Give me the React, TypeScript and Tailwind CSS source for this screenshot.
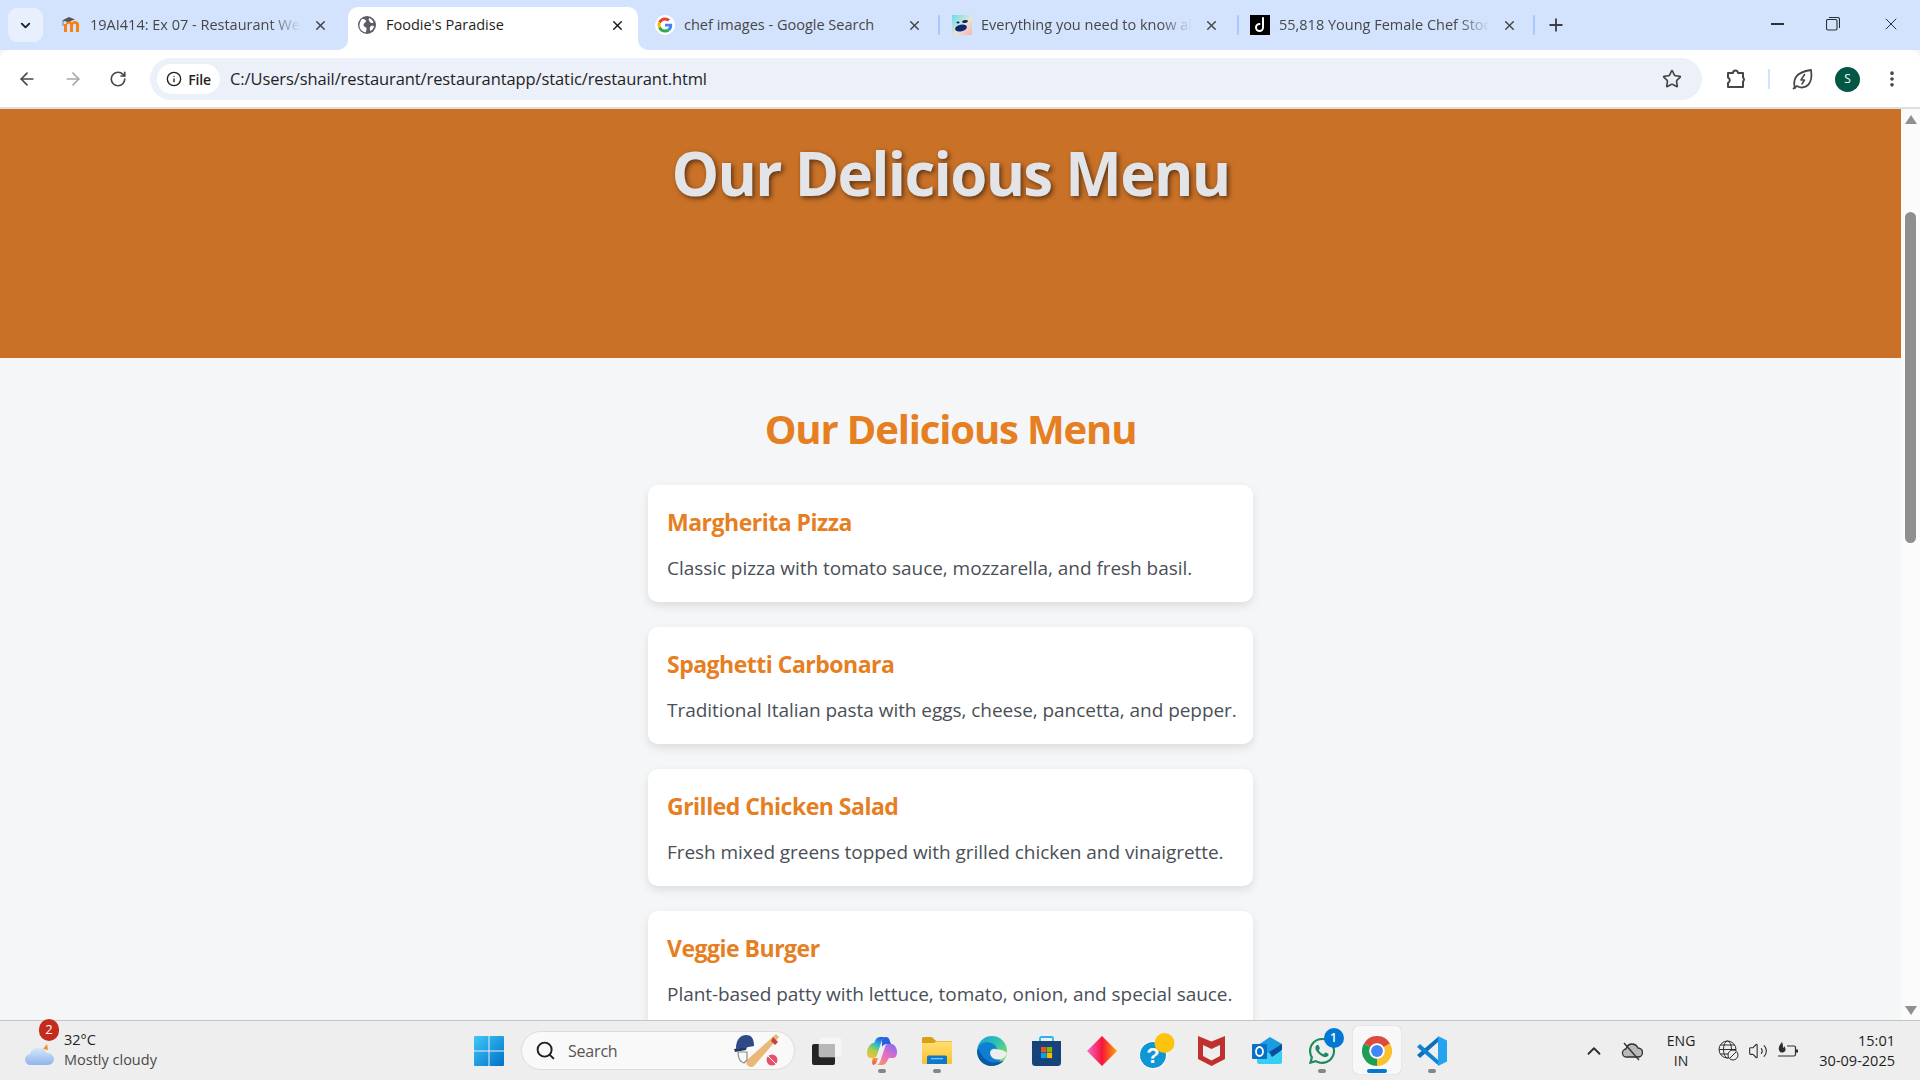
import React from "react";
import { ArrowLeft, ArrowRight, RotateCw, Star, MoreVertical, X, Plus, ChevronDown, ChevronUp, Info, Search, Volume2 } from "lucide-react";
import { FaWhatsapp } from "react-icons/fa";

const Moodle = () => (
  <svg width="20" height="18" viewBox="0 0 20 18">
    <path d="M5 8c0-2 1-3 3-3s2.500.8 3 1.500C11.600 5.700 12.700 5 14 5c2.400 0 4 1.200 4 3.500V16h-3V9.500c0-1-.5-1.700-1.500-1.700S12 8.500 12 9.500V16H9V9.500c0-1-.5-1.700-1.500-1.700S6 8.500 6 9.500V16H3V8z" fill="#f98012" />
    <path d="M1 4.500 8 1l6 2.500-7 2.500z" fill="#555" />
    <path d="M2 5v5" stroke="#777" strokeWidth="1" />
  </svg>
);
const Globe = () => (
  <svg width="18" height="18" viewBox="0 0 18 18">
    <circle cx="9" cy="9" r="9" fill="#5b5e63" />
    <path d="M4 3c2 0 4 .5 4 2S6 7 5.500 8.500 7 11 8 11.500 8.500 15 7.500 16.500C4 15.500 1 13 1.500 8.500 2 6 3 4 4 3zM11 2c2 .5 4 2.500 4.500 4.500-1 1-3 .5-3.500-.5S10 4 11 2zM13 10c1.500-.5 3 0 3 .5-.5 2-2 4-3.500 4.500-1-1-1-4 .5-5z" fill="#fff" />
  </svg>
);
const GoogleG = ({ s = 20 }: { s?: number }) => (
  <svg width={s} height={s} viewBox="0 0 48 48">
    <circle cx="24" cy="24" r="24" fill="#fff" />
    <g transform="translate(6 6) scale(.75)">
      <path fill="#EA4335" d="M24 9.500c3.500 0 6.700 1.200 9.200 3.600l6.900-6.900C35.900 2.400 30.500 0 24 0 14.600 0 6.500 5.400 2.600 13.200l8 6.200C12.500 13.700 17.800 9.500 24 9.500z" />
      <path fill="#4285F4" d="M47 24.500c0-1.600-.1-3.100-.4-4.500H24v9h12.900c-.6 3-2.200 5.500-4.800 7.200l7.700 6C44.300 38 47 31.800 47 24.500z" />
      <path fill="#FBBC05" d="M10.600 28.600c-.5-1.400-.8-3-.8-4.600s.3-3.200.8-4.600l-8-6.200C.9 16.500 0 20.100 0 24s.9 7.500 2.600 10.800l8-6.200z" />
      <path fill="#34A853" d="M24 48c6.500 0 11.900-2.100 15.900-5.800l-7.700-6c-2.200 1.400-4.900 2.300-8.200 2.300-6.200 0-11.500-4.200-13.400-9.900l-8 6.200C6.500 42.600 14.600 48 24 48z" />
    </g>
  </svg>
);
const Perplex = () => (
  <svg width="20" height="20" viewBox="0 0 20 20">
    <defs>
      <linearGradient id="pg" x1="0" y1="0" x2="1" y2="1">
        <stop offset="0" stopColor="#5fe0e8" />
        <stop offset=".55" stopColor="#e7e5d5" />
        <stop offset="1" stopColor="#fbb0b0" />
      </linearGradient>
    </defs>
    <rect width="20" height="20" fill="url(#pg)" />
    <ellipse cx="9" cy="13" rx="6" ry="3.300" fill="#10266f" transform="rotate(-12 9 13)" />
    <ellipse cx="13" cy="6.500" rx="3" ry="1.500" fill="#10266f" transform="rotate(-10 13 6.500)" />
    <ellipse cx="6" cy="7.500" rx="1.600" ry=".9" fill="#10266f" />
  </svg>
);
const Dreams = () => (
  <svg width="20" height="20" viewBox="0 0 20 20">
    <rect width="20" height="20" fill="#000" />
    <path d="M13 3v9.500a3.500 3.500 0 1 1-3.500-3.500" fill="none" stroke="#fff" strokeWidth="2" strokeLinecap="round" />
  </svg>
);
const Restore = () => (
  <svg width="14" height="14" viewBox="0 0 14 14" fill="none" stroke="#2b2f35" strokeWidth="1.100">
    <rect x=".5" y="2.500" width="10.500" height="10.500" rx="1.500" />
    <path d="M3 .5h8.500A2 2 0 0 1 13.500 2.500V11" />
  </svg>
);
const Puzzle = () => (
  <svg width="22" height="22" viewBox="0 0 22 22" fill="none" stroke="#474747" strokeWidth="2" strokeLinejoin="round">
    <path d="M3 5h5a2.500 2.500 0 0 1 5 0h5v4.500a2.500 2.500 0 0 1 0 4V19H3v-4a3 3 0 0 0 0-5.500z" />
  </svg>
);
const Leaf = () => (
  <svg width="24" height="24" viewBox="0 0 24 24" fill="none" stroke="#474747" strokeWidth="1.800" strokeLinejoin="round" strokeLinecap="round">
    <path d="M4 21c-1-3-1.500-7 1-11 3-4.500 8-6 15-7 1 6 .5 11.500-3 15-3 3-7.500 3-10 1.500" />
    <path d="M13.500 7.500 10 13h3.500L11 17" strokeWidth="1.500" />
    <path d="M2.500 21.500 6 19" />
  </svg>
);
const WinLogo = () => (
  <svg width="30" height="30" viewBox="0 0 30 30">
    <defs>
      <linearGradient id="wl" x1="0" y1="0" x2="1" y2="1">
        <stop offset="0" stopColor="#3fc8f8" />
        <stop offset="1" stopColor="#0071c9" />
      </linearGradient>
    </defs>
    <path d="M0 1a1 1 0 0 1 1-1h13.500v14.500H0zM15.500 0H29a1 1 0 0 1 1 1v13.500H15.500zM0 15.500h14.500V30H1a1 1 0 0 1-1-1zM15.500 15.500H30V29a1 1 0 0 1-1 1H15.500z" fill="url(#wl)" />
  </svg>
);
const Cricket = () => (
  <svg width="52" height="38" viewBox="0 0 52 38">
    <path d="M44 2 47 5 22 34c-2 2-5 1-7-1-1-2-1-3 0-5z" fill="#e9b876" />
    <path d="M41 5l5 5-3 3-4-4z" fill="#c4433c" />
    <path d="M4 16C4 7 9 3 14 3s8 3 8 11l-11 2-7 1z" fill="#2e4a87" />
    <path d="M2 17l13-2-1 3-11 2z" fill="#24386a" />
    <path d="M6 20c0 6 2 10 6 11l3-3V20z" fill="none" stroke="#8c8c8c" strokeWidth="1.200" />
    <circle cx="40" cy="28" r="5.500" fill="#e4536c" />
    <path d="M36 24l8 8" stroke="#fff" strokeWidth="1" />
  </svg>
);
const TaskView = () => (
  <svg width="30" height="28" viewBox="0 0 30 28">
    <rect x="0" y="7" width="23" height="21" rx="2" fill="#242424" />
    <rect x="7" y="0" width="23" height="20" rx="2" fill="#f6f6f6" stroke="#e0e0e0" strokeWidth=".5" />
    <rect x="7" y="7" width="16" height="13" rx="1" fill="#b8b8b8" />
  </svg>
);
const Copilot = () => (
  <svg width="30" height="28" viewBox="0 0 30 28">
    <defs>
      <linearGradient id="c1" x1=".7" y1="0" x2=".2" y2="1">
        <stop offset="0" stopColor="#1e5fd8" />
        <stop offset=".35" stopColor="#2bb7d8" />
        <stop offset=".65" stopColor="#a8cf45" />
        <stop offset="1" stopColor="#f4c33e" />
      </linearGradient>
      <linearGradient id="c2" x1=".8" y1="0" x2=".2" y2="1">
        <stop offset="0" stopColor="#8f6cf0" />
        <stop offset=".55" stopColor="#e66fc0" />
        <stop offset="1" stopColor="#f7926a" />
      </linearGradient>
      <linearGradient id="c3" x1="0" y1="0" x2="0" y2="1">
        <stop offset="0" stopColor="#f59a3c" />
        <stop offset="1" stopColor="#ef4c58" />
      </linearGradient>
    </defs>
    <path d="M9 2c1-1 2-2 4-2h6c-2 0-3 1-4 3l-5 15c-.6 2-2 3-4 3H4c-3 0-4-2-4-5 0-3 1-6 3-8 1-1.500 3-2 4-2z" fill="url(#c1)" />
    <path d="M21 7h4c3 1 5 4 5 8 0 3-1 6-4 6h-4l-3 5c-1 1-2 2-4 2h-6c2 0 3-1 4-3l5-15c.6-2 1.500-3 3-3z" fill="url(#c2)" />
    <path d="M6 21h5l-1.500 4c-.5 2-2 3-3.500 3 -1.500-2-1-5 0-7z" fill="url(#c3)" />
    <path d="M15 3c1-2 2-3 4-3 2 0 3 1 3.500 3l1.500 4h-4c-2 0-4 1-5 3z" fill="#2a5ee0" />
  </svg>
);
const Explorer = () => (
  <svg width="30" height="27" viewBox="0 0 30 27">
    <defs>
      <linearGradient id="ex" x1="0" y1="0" x2="0" y2="1">
        <stop offset="0" stopColor="#ffe071" />
        <stop offset="1" stopColor="#fcc02e" />
      </linearGradient>
    </defs>
    <path d="M0 1.500A1.500 1.500 0 0 1 1.500 0H9c1 0 2 .8 3 2l2 2H30v3H0z" fill="#d99f17" />
    <path d="M0 6l12 0 2-1.500H29a1 1 0 0 1 1 1V26a1 1 0 0 1-1 1H1a1 1 0 0 1-1-1z" fill="url(#ex)" />
    <path d="M5 20a1.500 1.500 0 0 1 1.500-1.500h17A1.500 1.500 0 0 1 25 20v7H5z" fill="#0f78c9" />
    <rect x="9" y="21" width="12" height="1.300" fill="#7cc4f2" />
  </svg>
);
const Edge = () => (
  <svg width="30" height="30" viewBox="0 0 32 32">
    <defs>
      <linearGradient id="e1" x1="0" y1="0" x2="1" y2=".8">
        <stop offset="0" stopColor="#1e9be0" />
        <stop offset=".5" stopColor="#2cc3b0" />
        <stop offset="1" stopColor="#8ee05a" />
      </linearGradient>
    </defs>
    <circle cx="16" cy="16" r="16" fill="url(#e1)" />
    <path d="M0 16c0 9 7 16 15 16 5 0 10-2 14-6-5 2-12 2-17-2-5-3-7-8-5-13C3 12 0 14 0 16z" fill="#0c5aa6" />
    <path d="M1 14C2 8 8 6 13 7c5 1 8 4 8 7-2-1-6-1-7 2-1 4 3 7 9 8 1 0 2 2 2 2-5 3-11 3-15-1C5 22 4 17 1 14z" fill="#0f7fd4" />
    <path d="M20 14c5 0 9 1 12 4-1 3-3 6-7 7-5 1-11-2-11-7 0-3 3-5 6-4z" fill="#eeeeee" />
  </svg>
);
const Store = () => (
  <svg width="29" height="30" viewBox="0 0 29 30">
    <path d="M8 6V2.500A1.500 1.500 0 0 1 9.500 1h10A1.500 1.500 0 0 1 21 2.500V6" fill="none" stroke="#29b4ec" strokeWidth="1.800" />
    <path d="M0 5h29v21.500a3.500 3.500 0 0 1-3.500 3.500h-22A3.500 3.500 0 0 1 0 26.500z" fill="#15437a" />
    <rect x="9" y="11" width="5.300" height="5.300" fill="#f25022" />
    <rect x="14.800" y="11" width="5.300" height="5.300" fill="#7fba00" />
    <rect x="9" y="16.800" width="5.300" height="5.300" fill="#00a4ef" />
    <rect x="14.800" y="16.800" width="5.300" height="5.300" fill="#ffb900" />
  </svg>
);
const Diamond = () => (
  <svg width="30" height="30" viewBox="0 0 30 30">
    <defs>
      <linearGradient id="d1" x1="0" y1="0" x2="1" y2="0">
        <stop offset="0" stopColor="#f56ad0" />
        <stop offset=".5" stopColor="#f6153c" />
        <stop offset="1" stopColor="#ffa200" />
      </linearGradient>
    </defs>
    <path d="M15 0 30 15 15 30 0 15z" fill="url(#d1)" />
  </svg>
);
const Help = () => (
  <svg width="36" height="36" viewBox="0 0 36 36">
    <circle cx="14" cy="22" r="14" fill="#ffffff" />
    <circle cx="14" cy="22" r="13" fill="#0f96d6" />
    <text x="14" y="30" textAnchor="middle" fill="#fff" fontSize="22" fontWeight="700" fontFamily="'Liberation Sans',sans-serif">?</text>
    <circle cx="25.500" cy="10" r="10" fill="#fdc40d" />
  </svg>
);
const McAfee = () => (
  <svg width="27" height="30" viewBox="0 0 27 30">
    <path d="M0 0 13.500 5.500 27 0v23L13.500 30 0 23zM5 9v11l8.500 4.500L22 20V9l-8.500 4z" fill="#c0302d" fillRule="evenodd" />
  </svg>
);
const Outlook = () => (
  <svg width="30" height="27" viewBox="0 0 30 27">
    <path d="M5 14h25v11a2 2 0 0 1-2 2H7a2 2 0 0 1-2-2z" fill="#38cdf5" />
    <path d="M6 8 18 0l12 7v2L16 16 6 11z" fill="#1b9be0" />
    <path d="M17 15 30 7v6L20 20z" fill="#0c4d9c" />
    <rect x="0" y="7" width="15" height="15" rx="1" fill="#0c6fc7" />
    <ellipse cx="7.500" cy="14.500" rx="3.500" ry="4.500" fill="none" stroke="#fff" strokeWidth="1.800" />
  </svg>
);
const Chrome = () => (
  <svg width="30" height="30" viewBox="0 0 48 48">
    <path d="M24 24 3.200 12A24 24 0 0 1 44.800 12z" fill="#dd4b3e" />
    <path d="M24 24V48A24 24 0 0 1 3.200 12z" fill="#1f9d55" />
    <path d="M24 24 44.800 12A24 24 0 0 1 24 48z" fill="#fbc02d" />
    <circle cx="24" cy="24" r="12.500" fill="#fff" />
    <circle cx="24" cy="24" r="9.500" fill="#4285f4" />
  </svg>
);
const VSCode = () => (
  <svg width="30" height="30" viewBox="0 0 30 30">
    <path d="M21 1 0 19l3 3 18-16z" fill="#0a6fbd" />
    <path d="M21 29 0 11l3-3 18 16z" fill="#0d85d3" />
    <path d="M21 0 30 4.500v21L21 30z" fill="#24a3ee" />
  </svg>
);
const CloudSlash = () => (
  <svg width="22" height="20" viewBox="0 0 22 20">
    <path d="M6 16a4 4 0 0 1-1-8c1-3 3-5 6-5 3 0 5 2 6 4a4.500 4.500 0 0 1 0 9z" fill="#b9b9b9" stroke="#2e2e2e" strokeWidth="1.300" />
    <path d="M3 2 18 19" stroke="#2e2e2e" strokeWidth="1.300" />
  </svg>
);
const NetGlobe = () => (
  <svg width="21" height="21" viewBox="0 0 21 21" fill="none" stroke="#2e2e2e" strokeWidth="1">
    <circle cx="9.500" cy="9.500" r="8.500" />
    <ellipse cx="9.500" cy="9.500" rx="4" ry="8.500" />
    <path d="M1 9.500h17M2.500 5h14M2.500 14h9" />
    <circle cx="15" cy="15" r="5" fill="#eeeeee" />
    <path d="M12 18l6-6" />
  </svg>
);
const Battery = () => (
  <svg width="22" height="20" viewBox="0 0 22 20" fill="none" stroke="#2e2e2e" strokeWidth="1.200">
    <path d="M10 5h7a1.500 1.500 0 0 1 1.500 1.500v7A1.500 1.500 0 0 1 17 15H1" />
    <path d="M20 8.500v3" strokeWidth="2" />
    <path d="M5 1C3 4 1 6 2 9s3 3 5 2 2-4 0-6c0 1-.5 2-1 2 0-2 0-4-1-6z" fill="#2e2e2e" stroke="none" />
  </svg>
);
const Cloudy = () => (
  <svg width="30" height="24" viewBox="0 0 30 24">
    <defs>
      <linearGradient id="cl" x1="0" y1="0" x2="0" y2="1">
        <stop offset="0" stopColor="#d6e5fb" />
        <stop offset="1" stopColor="#8fb5ea" />
      </linearGradient>
    </defs>
    <path d="M18 6l4-5 1 6z" fill="#f0902a" />
    <path d="M6 22a5.500 5.500 0 0 1-1-11c1-4 4-6 9-6 3 0 6 2 8 5 4 0 7 3 7 6s-3 6-6 6z" fill="url(#cl)" />
  </svg>
);

const Tab = ({ icon, title, active, fade, className }: { icon: React.ReactNode; title: string; active?: boolean; fade?: boolean; className: string }) => (
  <div className={`relative flex h-[43px] shrink-0 items-center pb-[7px] ${active ? "rounded-t-[10px] bg-white" : ""} ${className}`}>
    <span className="flex w-[20px] shrink-0 items-center justify-center">{icon}</span>
    <span
      className={`ml-[9px] min-w-0 flex-1 overflow-hidden whitespace-nowrap text-[14.5px] ${active ? "text-[#1f1f1f]" : "text-[#474747]"} ${fade ? "[mask-image:linear-gradient(to_right,black_85%,transparent_100%)]" : ""}`}
    >
      {title}
    </span>
    <X size={15} strokeWidth={2.4} className={`ml-3 shrink-0 ${active ? "text-[#1f1f1f]" : "text-[#474747]"}`} />
    {active && (
      <>
        <span className="absolute bottom-0 left-[-10px] h-[10px] w-[10px] bg-white">
          <span className="block h-full w-full rounded-br-[10px] bg-[#d3e3fd]" />
        </span>
        <span className="absolute bottom-0 right-[-10px] h-[10px] w-[10px] bg-white">
          <span className="block h-full w-full rounded-bl-[10px] bg-[#d3e3fd]" />
        </span>
      </>
    )}
  </div>
);
const Sep = () => <div className="mt-[8px] h-[20px] w-[2px] shrink-0 self-start rounded bg-[#a8c7fa]" />;

const Card = ({ title, text }: { title: string; text: string }) => (
  <div className="rounded-[10px] bg-white px-[19px] pt-[22px] pb-[19px] shadow-[0_4px_10px_rgba(0,0,0,0.1)]">
    <h3 className="text-[23px] leading-[31px] font-bold tracking-[-0.5px] text-[#e67e22]">{title}</h3>
    <p className="mt-[15px] whitespace-nowrap text-[19px] leading-[30px] tracking-[-0.05px] text-[#4a4f57]">{text}</p>
  </div>
);

const TB = ({ children, dot, on }: { children: React.ReactNode; dot?: boolean; on?: boolean }) => (
  <div className="relative flex h-[59px] w-[55px] shrink-0 items-center justify-center">
    {on && <span className="absolute left-[3.500px] top-[5px] h-[48px] w-[48px] rounded-[5px] bg-[#f8f8f8] shadow-[0_0_1px_rgba(0,0,0,0.3)]" />}
    <span className="relative flex">{children}</span>
    {dot && <span className="absolute bottom-[7px] left-1/2 h-[4px] w-[8px] -translate-x-1/2 rounded-full bg-[#868686]" />}
    {on && <span className="absolute bottom-[7px] left-1/2 h-[4px] w-[20px] -translate-x-1/2 rounded-full bg-[#0078d4]" />}
  </div>
);

export default function App() {
  return (
    <div className="flex h-screen w-full flex-col overflow-hidden bg-[#f4f6f8] font-['Open_Sans',sans-serif]">
      {/* Tab strip */}
      <div className="flex h-[50px] shrink-0 items-end bg-[#d3e3fd] pl-[8px]">
        <div className="mb-[8px] flex h-[34px] w-[35px] shrink-0 items-center justify-center rounded-[9px] bg-[#e9f0fd]">
          <ChevronDown size={15} strokeWidth={3} className="text-[#1f1f1f]" />
        </div>
        <div className="ml-[7px] flex items-center">
          <Tab className="w-[298px] pl-[11px] pr-[20px]" icon={<Moodle />} title="19AI414: Ex 07 - Restaurant Website" fade />
          <Tab className="w-[290px] pl-[9px] pr-[13px]" icon={<Globe />} title="Foodie's Paradise" active />
          <Tab className="w-[300px] pl-[17px] pr-[16px]" icon={<GoogleG />} title="chef images - Google Search" />
          <Sep />
          <Tab className="w-[297px] pl-[12px] pr-[18px]" icon={<Perplex />} title="Everything you need to know about" fade />
          <Sep />
          <Tab className="w-[294px] pl-[11px] pr-[16px]" icon={<Dreams />} title="55,818 Young Female Chef Stock Photos" fade />
          <Sep />
          <Plus size={20} strokeWidth={2.2} className="mb-[7px] ml-[11px] text-[#3b3f45]" />
        </div>
        <div className="mb-[16px] ml-auto flex items-center">
          <div className="h-[1.500px] w-[13px] bg-[#2b2f35]" />
          <div className="ml-[42px]"><Restore /></div>
          <X size={20} strokeWidth={1.2} className="ml-[41px] mr-[19px] text-[#2b2f35]" />
        </div>
      </div>
      {/* Toolbar */}
      <div className="flex h-[59px] shrink-0 items-center rounded-t-[10px] border-b-2 border-[#dfdfdf] bg-white pt-[1px] pl-[17px]">
        <ArrowLeft size={20} strokeWidth={2} className="text-[#474747]" />
        <ArrowRight size={20} strokeWidth={2} className="ml-[26px] text-[#a8a8a8]" />
        <RotateCw size={18} strokeWidth={2.2} className="ml-[26px] text-[#474747]" />
        <div className="ml-[23px] flex h-[42px] w-[1552px] items-center rounded-full bg-[#ebf0f9] pl-[7px]">
          <div className="flex h-[30px] w-[63px] items-center justify-center gap-[6px] rounded-full bg-white">
            <Info size={16} strokeWidth={2} className="text-[#1f1f1f]" />
            <span className="text-[14px] font-semibold tracking-[-0.2px] text-[#1f1f1f]">File</span>
          </div>
          <span className="ml-[10px] pt-[1px] text-[16.500px] tracking-[-0.1px] text-[#1f1f1f]">C:/Users/shail/restaurant/restaurantapp/static/restaurant.html</span>
          <Star size={20} strokeWidth={2} className="ml-auto mr-[20px] text-[#474747]" />
        </div>
        <div className="ml-[23px]"><Puzzle /></div>
        <div className="ml-[21px] h-[20px] w-[2px] bg-[#d3e3fd]" />
        <div className="ml-[21px]"><Leaf /></div>
        <div className="ml-[20px] flex h-[25px] w-[25px] items-center justify-center rounded-full bg-[#045645] text-[12px] text-white">S</div>
        <MoreVertical size={20} strokeWidth={2.4} className="ml-[22px] text-[#474747]" />
      </div>
      {/* Page */}
      <div className="flex min-h-0 flex-1">
        <div className="min-w-0 flex-1 overflow-hidden">
          <div className="flex h-[249px] justify-center bg-[#c97127] pt-[32px]">
            <h1 className="text-[60px] leading-[64px] font-bold tracking-[-1.7px] text-[#e2e4e8] [text-shadow:2px_2px_5px_rgba(0,0,0,0.55)]">Our Delicious Menu</h1>
          </div>
          <div className="mx-auto w-[605px] pt-[45px]">
            <h2 className="text-center text-[40px] leading-[52px] font-bold tracking-[-1.15px] text-[#e67e22]">Our Delicious Menu</h2>
            <div className="mt-[30px] flex flex-col gap-[25px]">
              <Card title="Margherita Pizza" text="Classic pizza with tomato sauce, mozzarella, and fresh basil." />
              <Card title="Spaghetti Carbonara" text="Traditional Italian pasta with eggs, cheese, pancetta, and pepper." />
              <Card title="Grilled Chicken Salad" text="Fresh mixed greens topped with grilled chicken and vinaigrette." />
              <Card title="Veggie Burger" text="Plant-based patty with lettuce, tomato, onion, and special sauce." />
            </div>
          </div>
        </div>
        {/* Scrollbar */}
        <div className="flex w-[19px] shrink-0 flex-col items-center bg-[#fbfbfb]">
          <div className="mt-[6px] h-0 w-0 border-x-[6.500px] border-b-[9px] border-x-transparent border-b-[#8f8f8f]" />
          <div className="mt-[88px] h-[331px] w-[11px] rounded-full bg-[#8f8f8f]" />
          <div className="mt-auto mb-[5px] h-0 w-0 border-x-[6.500px] border-t-[9px] border-x-transparent border-t-[#8f8f8f]" />
        </div>
      </div>
      {/* Taskbar */}
      <div className="flex h-[60px] shrink-0 items-center border-t border-[#c6c6c6] bg-[#eeeeee] text-[#1f1f1f]">
        <div className="relative ml-[25px] flex w-[449px] items-center">
          <div className="mt-[8px]"><Cloudy /></div>
          <span className="absolute left-[14px] top-[-13px] flex h-[22px] w-[20px] items-center justify-center rounded-full bg-[#c42b1c] text-[13px] text-white">2</span>
          <div className="ml-[9px] mt-[-2px] flex flex-col text-[14.500px] leading-[20px]">
            <span>32°C</span>
            <span className="text-[#4a4a4a]">Mostly cloudy</span>
          </div>
        </div>
        <WinLogo />
        <div className="ml-[17px] flex h-[39px] w-[274px] shrink-0 items-center rounded-full border border-[#dcdcdc] bg-[#f9f9f9] pl-[13px]">
          <Search size={21} strokeWidth={2.2} className="text-[#1f1f1f]" />
          <span className="ml-[12px] text-[16px] tracking-[-0.2px] text-[#555]">Search</span>
          <div className="ml-auto mr-[10px]"><Cricket /></div>
        </div>
        <div className="ml-[4px] flex items-center">
          <TB><TaskView /></TB>
          <TB dot><Copilot /></TB>
          <TB dot><Explorer /></TB>
          <TB><Edge /></TB>
          <TB><Store /></TB>
          <TB><Diamond /></TB>
          <TB><Help /></TB>
          <TB><McAfee /></TB>
          <TB><Outlook /></TB>
          <TB dot>
            <span className="relative flex">
              <FaWhatsapp size={30} className="text-[#1c8a5a]" />
              <span className="absolute right-[-7px] top-[-8px] flex h-[20px] w-[20px] items-center justify-center rounded-full bg-[#0078d4] text-[12px] font-semibold text-white">1</span>
            </span>
          </TB>
          <TB on><Chrome /></TB>
          <TB dot><VSCode /></TB>
        </div>
        <div className="ml-auto flex items-center pr-[25px]">
          <ChevronUp size={22} strokeWidth={2} className="text-[#2e2e2e]" />
          <div className="ml-[16px]"><CloudSlash /></div>
          <div className="ml-[24px] flex flex-col items-center text-[14px] leading-[20px]">
            <span>ENG</span>
            <span>IN</span>
          </div>
          <div className="ml-[23px]"><NetGlobe /></div>
          <Volume2 size={20} strokeWidth={1.300} className="ml-[9px] text-[#2e2e2e]" />
          <div className="ml-[9px]"><Battery /></div>
          <div className="ml-[20px] flex flex-col items-end text-[14.500px] leading-[20px]">
            <span>15:01</span>
            <span>30-09-2025</span>
          </div>
        </div>
      </div>
    </div>
  );
}
